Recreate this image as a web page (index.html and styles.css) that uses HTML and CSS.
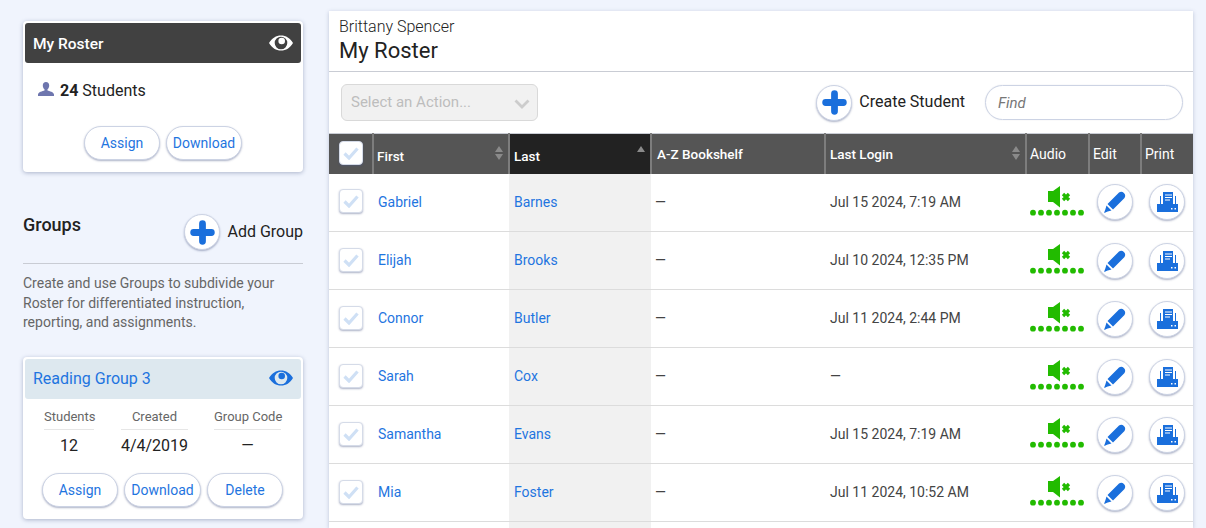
FILE: index.html
```html
<!DOCTYPE html>
<html lang="en">
<head>
<meta charset="utf-8">
<title>My Roster</title>
<link rel="stylesheet" href="styles.css">
</head>
<body>
<svg class="defs" width="0" height="0" aria-hidden="true">
  <symbol id="eye" viewBox="0 0 24 16"><path fill-rule="evenodd" d="M0 8C3 3 7 .5 12 .5S21 3 24 8c-3 5-7 7.500-12 7.500S3 13 0 8zM18.300 8a6.300 6.300 0 1 0-12.600 0 6.300 6.300 0 0 0 12.600 0zM16 6a3.300 3.300 0 1 0-6.600 0 3.300 3.300 0 0 0 6.600 0z"/></symbol>
  <symbol id="plus" viewBox="0 0 24 24"><path d="M12 3.500v17M3.500 12h17" stroke="#1a6fdc" stroke-width="6.500" stroke-linecap="round" fill="none"/></symbol>
  <symbol id="check" viewBox="0 0 16 14"><path d="M1.500 7.500l4.500 4.500L14.500 2.500" stroke="#cfe0f5" stroke-width="3.200" fill="none"/></symbol>
  <symbol id="pencil" viewBox="0 0 22 22"><path fill="#1a6fdc" d="M15 1.500a4 4 0 0 1 5.500 5.500L9 18.500 3.500 13z"/><path fill="#1a6fdc" d="M2.500 14.500l5 5-3.800 1L0 22l1.400-3.800z"/></symbol>
  <symbol id="printer" viewBox="0 0 21 20"><path fill="#1a6fdc" fill-rule="evenodd" d="M6 0h10v12H6zM8 2.500v1h7v-1zM8 5v1h7V5zM8 7.500v1h5v-1z"/><path fill="#1a6fdc" d="M3 4h1v8H3zM18 4h1v8h-1z"/><path fill="#1a6fdc" fill-rule="evenodd" d="M0 12h21v8H0zM14 16v1.500h1.500V16zM17.500 16v1.500H19V16z"/></symbol>
  <symbol id="audio" viewBox="0 0 54 30"><path fill="#22bb00" d="M18 5h5L30 0v21.500L23 16h-5z"/><path d="M33 8l6 6M39 8l-6 6" stroke="#22bb00" stroke-width="3.200" fill="none"/><g fill="#22bb00"><circle cx="3" cy="26.700" r="2.900"/><circle cx="11" cy="26.700" r="2.900"/><circle cx="19" cy="26.700" r="2.900"/><circle cx="27" cy="26.700" r="2.900"/><circle cx="35" cy="26.700" r="2.900"/><circle cx="43" cy="26.700" r="2.900"/><circle cx="51" cy="26.700" r="2.900"/></g></symbol>
  <symbol id="person" viewBox="0 0 16 14"><path fill="#6e76ae" d="M8 0c2 0 3.200 1.400 3.200 3.400 0 1.700-.8 3.100-1.700 3.800v1.200c1.800.6 6.500 1.500 6.500 4.100v1.500H0v-1.500c0-2.600 4.700-3.500 6.500-4.100V7.200C5.600 6.500 4.800 5.100 4.800 3.400 4.800 1.400 6 0 8 0z"/></symbol>
</svg>
<div class="page">
  <aside class="side">
    <section class="card first">
      <header class="card-head dark">
        <span>My Roster</span>
        <svg class="eye"><use href="#eye"/></svg>
      </header>
      <p class="count">
        <svg class="person"><use href="#person"/></svg>
        <b>24</b> Students
      </p>
      <div class="btns center">
        <a class="pill">Assign</a>
        <a class="pill">Download</a>
      </div>
    </section>

    <div class="groups-head">
      <h2>Groups</h2>
      <div class="add">
        <span class="round"><svg class="plus"><use href="#plus"/></svg></span>
        <span class="add-label">Add Group</span>
      </div>
    </div>
    <p class="blurb">Create and use Groups to subdivide your Roster for differentiated instruction, reporting, and assignments.</p>

    <section class="card group">
      <header class="card-head light">
        <span>Reading Group 3</span>
        <svg class="eye"><use href="#eye"/></svg>
      </header>
      <div class="stats">
        <div class="stat s1"><span class="lab">Students</span><span class="val">12</span></div>
        <div class="stat s2"><span class="lab">Created</span><span class="val">4/4/2019</span></div>
        <div class="stat s3"><span class="lab">Group Code</span><span class="val">—</span></div>
      </div>
      <div class="btns group-btns">
        <a class="pill">Assign</a>
        <a class="pill wide">Download</a>
        <a class="pill">Delete</a>
      </div>
    </section>
  </aside>

  <main class="main">
    <header class="title">
      <div class="who">Brittany Spencer</div>
      <h1>My Roster</h1>
    </header>
    <div class="tools">
      <div class="select"><span>Select an Action...</span>
        <svg class="chev" viewBox="0 0 16 10"><path d="M1.500 1.500L8 8l6.500-6.500" stroke="#ccc" stroke-width="2.800" fill="none"/></svg>
      </div>
      <div class="add create">
        <span class="round"><svg class="plus"><use href="#plus"/></svg></span>
        <span class="add-label">Create Student</span>
      </div>
      <div class="find">Find</div>
    </div>
    <table class="roster">
      <colgroup>
        <col class="c1"><col class="c2"><col class="c3"><col class="c4"><col class="c5"><col class="c6"><col class="c7"><col class="c8">
      </colgroup>
      <thead>
        <tr>
          <th><span class="box head-box"><svg class="check"><use href="#check"/></svg></span></th>
          <th class="low">First<i class="sort"></i></th>
          <th class="low active">Last<i class="sort up"></i></th>
          <th>A-Z Bookshelf</th>
          <th>Last Login<i class="sort"></i></th>
          <th class="plain">Audio</th>
          <th class="plain">Edit</th>
          <th class="plain">Print</th>
        </tr>
      </thead>
      <tbody>
        <tr>
          <td><span class="box"><svg class="check"><use href="#check"/></svg></span></td>
          <td><a>Gabriel</a></td><td class="shade"><a>Barnes</a></td><td>—</td><td>Jul 15 2024, 7:19 AM</td>
          <td class="ic"><svg class="audio"><use href="#audio"/></svg></td>
          <td class="ic"><span class="round"><svg class="pencil"><use href="#pencil"/></svg></span></td>
          <td class="ic"><span class="round"><svg class="printer"><use href="#printer"/></svg></span></td>
        </tr>
        <tr>
          <td><span class="box"><svg class="check"><use href="#check"/></svg></span></td>
          <td><a>Elijah</a></td><td class="shade"><a>Brooks</a></td><td>—</td><td>Jul 10 2024, 12:35 PM</td>
          <td class="ic"><svg class="audio"><use href="#audio"/></svg></td>
          <td class="ic"><span class="round"><svg class="pencil"><use href="#pencil"/></svg></span></td>
          <td class="ic"><span class="round"><svg class="printer"><use href="#printer"/></svg></span></td>
        </tr>
        <tr>
          <td><span class="box"><svg class="check"><use href="#check"/></svg></span></td>
          <td><a>Connor</a></td><td class="shade"><a>Butler</a></td><td>—</td><td>Jul 11 2024, 2:44 PM</td>
          <td class="ic"><svg class="audio"><use href="#audio"/></svg></td>
          <td class="ic"><span class="round"><svg class="pencil"><use href="#pencil"/></svg></span></td>
          <td class="ic"><span class="round"><svg class="printer"><use href="#printer"/></svg></span></td>
        </tr>
        <tr>
          <td><span class="box"><svg class="check"><use href="#check"/></svg></span></td>
          <td><a>Sarah</a></td><td class="shade"><a>Cox</a></td><td>—</td><td>—</td>
          <td class="ic"><svg class="audio"><use href="#audio"/></svg></td>
          <td class="ic"><span class="round"><svg class="pencil"><use href="#pencil"/></svg></span></td>
          <td class="ic"><span class="round"><svg class="printer"><use href="#printer"/></svg></span></td>
        </tr>
        <tr>
          <td><span class="box"><svg class="check"><use href="#check"/></svg></span></td>
          <td><a>Samantha</a></td><td class="shade"><a>Evans</a></td><td>—</td><td>Jul 15 2024, 7:19 AM</td>
          <td class="ic"><svg class="audio"><use href="#audio"/></svg></td>
          <td class="ic"><span class="round"><svg class="pencil"><use href="#pencil"/></svg></span></td>
          <td class="ic"><span class="round"><svg class="printer"><use href="#printer"/></svg></span></td>
        </tr>
        <tr>
          <td><span class="box"><svg class="check"><use href="#check"/></svg></span></td>
          <td><a>Mia</a></td><td class="shade"><a>Foster</a></td><td>—</td><td>Jul 11 2024, 10:52 AM</td>
          <td class="ic"><svg class="audio"><use href="#audio"/></svg></td>
          <td class="ic"><span class="round"><svg class="pencil"><use href="#pencil"/></svg></span></td>
          <td class="ic"><span class="round"><svg class="printer"><use href="#printer"/></svg></span></td>
        </tr>
        <tr>
          <td></td><td></td><td class="shade"></td><td></td><td></td><td></td><td></td><td></td>
        </tr>
      </tbody>
    </table>
  </main>
</div>
</body>
</html>
```
FILE: styles.css
```css
* { box-sizing: border-box; }
html, body { height: 528px; overflow: hidden; }
body {
  margin: 0;
  background: #f0f4fd;
  font-family: Roboto, "Liberation Sans", sans-serif;
  color: #222;
}
.defs { display: block; height: 0; }
.page { display: flex; align-items: flex-start; padding: 11px 13px 0 23px; gap: 26px; }

.side { width: 280px; flex: none; padding-top: 10px; }
.card {
  background: #fff;
  border-radius: 4px;
  padding: 2px;
  box-shadow: 0 1px 4px rgba(70, 85, 130, .4);
}
.first { height: 151px; }
.card-head {
  height: 40px;
  display: flex;
  align-items: center;
  justify-content: space-between;
  padding: 0 8px;
  border-radius: 3px;
}
.dark { background: #414141; color: #fff; font-weight: 500; font-size: 15.500px; padding-top: 1px; }
.light { background: #dde8ef; color: #1f75e0; font-size: 16px; padding-bottom: 2px; }
.eye { width: 24px; height: 16px; fill: #fff; }
.dark .eye { margin-top: -2px; }
.light .eye { fill: #1a6fdc; }
.count { margin: 0; height: 63px; padding: 0 0 7px 13px; font-size: 16px; line-height: 18px; display: flex; align-items: center; gap: 6px; }
.count b { font-weight: 700; margin-right: -2px; }
.person { width: 16px; height: 14px; margin-bottom: 5px; }
.btns { display: flex; gap: 6px; }
.center { justify-content: center; }
.group-btns { padding-left: 17px; }
.pill {
  width: 76px;
  height: 34px;
  display: flex;
  align-items: center;
  justify-content: center;
  font-size: 14px;
  color: #1f75e0;
  background: #fff;
  border: 1px solid #ccd3e4;
  border-radius: 17px;
  box-shadow: 0 1px 2px rgba(70, 85, 130, .45);
}
.wide { width: 77px; }

.groups-head { display: flex; justify-content: space-between; align-items: flex-start; margin-top: 43px; height: 49px; border-bottom: 1px solid #c9ccd4; }
.groups-head h2 { margin: 0; font-size: 18px; font-weight: 500; line-height: 20px; color: #222; }
.add { display: flex; align-items: center; gap: 7px; font-size: 16px; color: #222; }
.add-label { padding-bottom: 2px; }
.groups-head .add { margin-top: -1px; }
.round {
  width: 36px;
  height: 36px;
  display: flex;
  align-items: center;
  justify-content: center;
  background: #fff;
  border: 1px solid #ccd3e4;
  border-radius: 50%;
  box-shadow: 0 1px 2px rgba(70, 85, 130, .45);
  flex: none;
}
.plus { width: 25px; height: 25px; }
.blurb { margin: 10px 0 0; font-size: 14px; line-height: 19.500px; color: #666; height: 66px; }
.group { margin-top: 17px; height: 162px; }
.stats { display: flex; padding: 9px 0 0 19px; height: 74px; }
.stat { display: flex; flex-direction: column; align-items: center; }
.s1 { width: 50px; }
.s2 { width: 67px; margin-left: 27px; }
.s3 { width: 67px; margin-left: 26px; }
.lab { width: 100%; height: 22px; text-align: center; white-space: nowrap; font-size: 13px; line-height: 18px; color: #666; border-bottom: 1px solid #e6e6e6; }
.val { font-size: 16px; line-height: 32px; color: #222; white-space: nowrap; }

.main {
  flex: 1;
  min-width: 0;
  height: 517px;
  background: #fff;
  box-shadow: 0 1px 4px rgba(70, 85, 130, .3);
  overflow: hidden;
}
.title { height: 61px; padding: 7px 10px 0; border-bottom: 1px solid #c9ccd4; }
.who { font-size: 16px; font-weight: 300; line-height: 18px; color: #222; }
.title h1 { margin: 1px 0 0; font-size: 22px; font-weight: 400; line-height: 27px; color: #222; }
.tools { height: 61px; display: flex; align-items: center; padding: 0 10px 0 12px; }
.select {
  width: 197px;
  height: 37px;
  background: #f1f1f1;
  border: 1px solid #d9d9d9;
  border-radius: 6px;
  display: flex;
  align-items: center;
  justify-content: space-between;
  padding: 0 7px 1px 9px;
  font-size: 15px;
  color: #bdbdbd;
}
.chev { width: 16px; height: 10px; margin-top: 3px; }
.create { margin-left: auto; margin-right: 20px; }
.find {
  width: 198px;
  height: 35px;
  border: 1px solid #ccd3e4;
  border-radius: 18px;
  box-shadow: 0 0 1px rgba(70, 85, 130, .3);
  display: flex;
  align-items: center;
  padding-left: 12px;
  font-size: 15px;
  font-style: italic;
  color: #777;
}

.roster { width: 864px; table-layout: fixed; border-collapse: collapse; }
.c1 { width: 44px; } .c2 { width: 136px; } .c3 { width: 142px; } .c4 { width: 174px; }
.c5 { width: 201px; } .c6 { width: 63px; } .c7 { width: 52px; } .c8 { width: 52px; }
.roster th {
  position: relative;
  height: 40px;
  padding: 1px 0 0 4px;
  background: #555;
  color: #fff;
  font-size: 13.500px;
  font-weight: 500;
  text-align: left;
  border-top: 1px solid #c9ccd4;
  border-right: 2px solid #7d7d7d;
}
.roster th:first-child { padding: 0; }
.roster th:last-child { border-right: 0; }
.roster th.plain { font-weight: 400; font-size: 14px; padding: 0 0 0 3px; }
.roster th.low { padding-top: 4px; }
.roster th.active { background: #222; }
.roster th:nth-child(2) { padding-left: 3px; }
.roster th:nth-child(4) { padding-left: 5px; }
.roster th:nth-child(5) { padding-left: 4px; }
.sort {
  position: absolute;
  right: 5px;
  top: 12px;
  width: 0;
  height: 0;
  border: 4px solid transparent;
  border-bottom: 6px solid #8a8a8a;
  border-top: 0;
}
.sort::after {
  content: "";
  position: absolute;
  left: -4px;
  top: 8px;
  border: 4px solid transparent;
  border-top: 6px solid #8a8a8a;
  border-bottom: 0;
}
.sort.up::after { display: none; }
.roster td {
  height: 58px;
  padding: 0 0 1px 4px;
  font-size: 14px;
  color: #444;
  border-bottom: 1px solid #dcdcdc;
  white-space: nowrap;
}
.roster td:first-child { padding: 0 0 2px 10px; }
.roster th:first-child .box { margin-left: 10px; }
.roster td:nth-child(2) { padding-left: 5px; }
.roster td:nth-child(3) { padding-left: 5px; }
.roster td:nth-child(5) { padding-left: 5px; }
.roster td a { color: #1f75e0; }
.shade { background: #f1f1f1; }
.box {
  width: 24px;
  height: 24px;
  display: flex;
  align-items: center;
  justify-content: center;
  background: #fff;
  border: 1px solid #d5dbe8;
  border-radius: 4px;
  box-shadow: 0 1px 2px rgba(70, 85, 130, .45);
}
.head-box { margin-top: -1px; }
.check { width: 16px; height: 14px; }
.roster td.ic { padding: 0; }
.roster td:nth-child(7) .round { margin: 0 0 0 8px; }
.roster td:nth-child(8) .round { margin: 0 0 0 8px; }
.roster td:nth-child(6) { padding: 0 0 0 4px; }
.audio { display: block; width: 54px; height: 30px; margin-bottom: 3px; }
.pencil { width: 22px; height: 22px; }
.printer { width: 21px; height: 20px; }
```
